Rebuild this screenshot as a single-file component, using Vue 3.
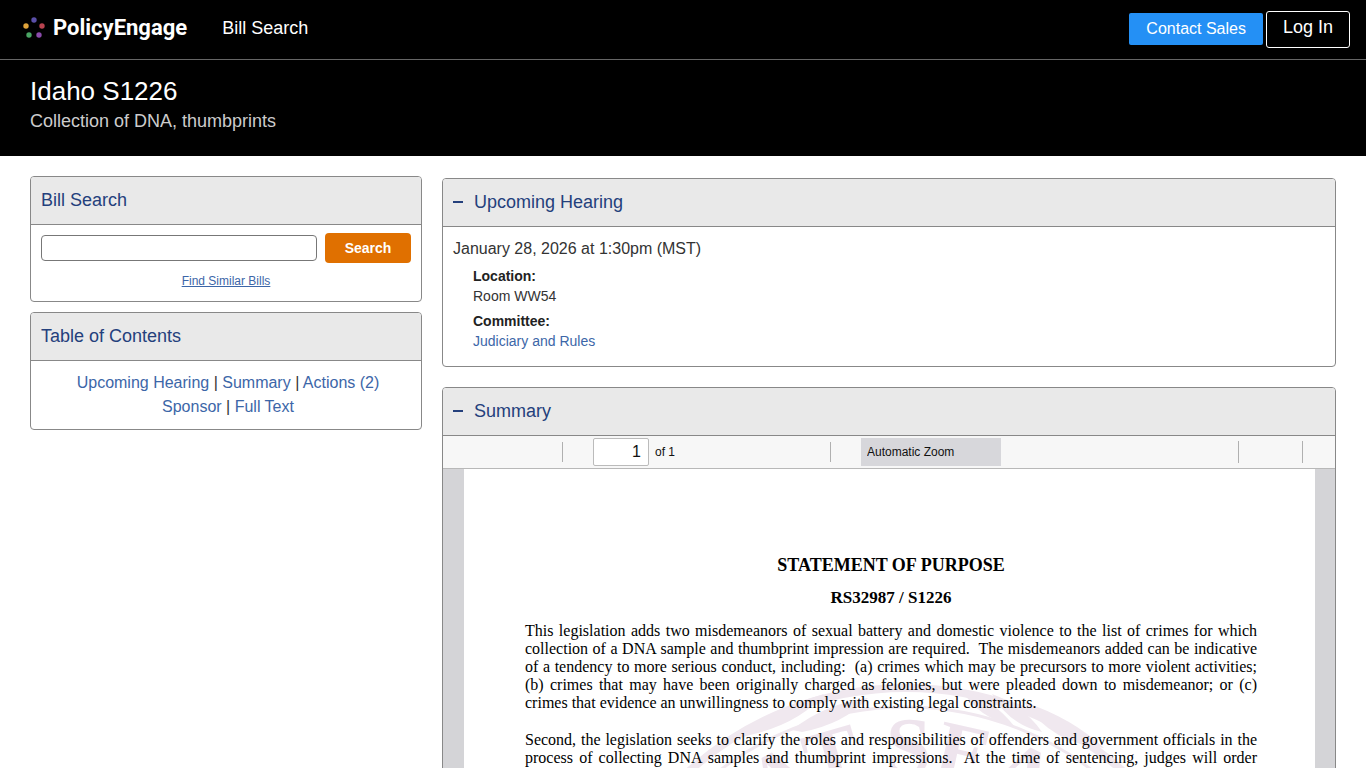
<script setup>
import { ref } from 'vue'

const query = ref('')
const pageNumber = ref('1')
const dots = [
  { x: 12, y: 3, c: '#5a4fa8' },
  { x: 4, y: 9, c: '#e0a33a' },
  { x: 20, y: 9, c: '#b8434f' },
  { x: 7, y: 18, c: '#4aa564' },
  { x: 17, y: 18, c: '#8a4bab' }
]
const first = [
  'This legislation adds two misdemeanors of sexual battery and domestic violence to the list of crimes for which',
  'collection of a DNA sample and thumbprint impression are required.\u00a0 The misdemeanors added can be indicative',
  'of a tendency to more serious conduct, including:\u00a0 (a) crimes which may be precursors to more violent activities;',
  '(b) crimes that may have been originally charged as felonies, but were pleaded down to misdemeanor; or (c)',
  'crimes that evidence an unwillingness to comply with existing legal constraints.'
]
const second = [
  'Second, the legislation seeks to clarify the roles and responsibilities of offenders and government officials in the',
  'process of collecting DNA samples and thumbprint impressions.\u00a0 At the time of sentencing, judges will order'
]
</script>

<template>
  <div class="page">
    <header class="topbar">
      <a class="brand" href="#">
        <svg width="23" height="22" viewBox="0 0 23 22" aria-hidden="true">
          <circle v-for="d in dots" :key="d.c" :cx="d.x" :cy="d.y" r="2.7" :fill="d.c" />
        </svg>
        <span>PolicyEngage</span>
      </a>
      <nav class="nav"><a href="#">Bill Search</a></nav>
      <div class="actions">
        <a class="sales" href="#">Contact Sales</a>
        <a class="login" href="#">Log In</a>
      </div>
    </header>
    <section class="hero">
      <h1>Idaho S1226</h1>
      <p>Collection of DNA, thumbprints</p>
    </section>
    <main class="columns">
      <aside class="side">
        <section class="panel">
          <h2>Bill Search</h2>
          <form class="search" @submit.prevent>
            <div class="row">
              <input v-model="query" type="text" aria-label="Bill Search">
              <button type="submit">Search</button>
            </div>
            <a href="#">Find Similar Bills</a>
          </form>
        </section>
        <section class="panel">
          <h2>Table of Contents</h2>
          <nav class="toc">
            <div><a href="#hearing">Upcoming Hearing</a> | <a href="#summary">Summary</a> | <a href="#">Actions (2)</a></div>
            <div><a href="#">Sponsor</a> | <a href="#">Full Text</a></div>
          </nav>
        </section>
      </aside>
      <div class="content">
        <section id="hearing" class="panel">
          <h2><button type="button" class="toggle" aria-label="Collapse Upcoming Hearing"></button>Upcoming Hearing</h2>
          <div class="hearing">
            <p class="when">January 28, 2026 at 1:30pm (MST)</p>
            <dl>
              <dt>Location:</dt>
              <dd>Room WW54</dd>
              <dt>Committee:</dt>
              <dd><a href="#">Judiciary and Rules</a></dd>
            </dl>
          </div>
        </section>
        <section id="summary" class="panel">
          <h2><button type="button" class="toggle" aria-label="Collapse Summary"></button>Summary</h2>
          <div class="toolbar">
            <div class="tools start">
              <i class="rule"></i>
              <input id="pageno" v-model="pageNumber" type="text">
              <label for="pageno">of 1</label>
            </div>
            <div class="tools middle">
              <i class="rule"></i>
              <select aria-label="Zoom"><option>Automatic Zoom</option></select>
            </div>
            <div class="tools end"><i class="rule"></i><i class="rule"></i></div>
          </div>
          <div class="viewer">
            <article class="sheet">
              <svg class="seal" width="660" height="660" viewBox="0 0 660 660" aria-hidden="true">
                <defs><path id="ring" d="M92 330a238 238 0 0 1 476 0" /></defs>
                <g fill="none" stroke="#f0e8ef">
                  <circle cx="330" cy="330" r="324" stroke-width="8" />
                  <circle cx="330" cy="330" r="305" stroke-width="3" />
                </g>
                <g fill="#f0e8ef">
                  <path d="M155 58Q190 28 248 12Q225 40 178 52Z" />
                  <path d="M216 48Q248 22 292 16Q268 42 226 50Z" />
                  <path d="M386 8Q418 18 438 44Q402 36 386 8Z" />
                  <path d="M416 12Q448 24 466 50Q432 42 416 12Z" />
                  <path d="M448 20Q496 36 528 66Q476 62 448 20Z" />
                </g>
                <text class="sealtext" text-anchor="middle"><textPath href="#ring" startOffset="308">GREAT SEAL</textPath></text>
              </svg>
              <h3>STATEMENT OF PURPOSE</h3>
              <h4>RS32987 / S1226</h4>
              <p><span v-for="l in first" :key="l">{{ l }}</span></p>
              <p class="open"><span v-for="l in second" :key="l">{{ l }}</span></p>
            </article>
          </div>
        </section>
      </div>
    </main>
  </div>
</template>

<style>
body { margin: 0; background: #fff; }
</style>

<style scoped>
* { box-sizing: border-box; }
.page { display: flex; flex-direction: column; height: 100vh; overflow: hidden; font-family: "Liberation Sans", Arial, sans-serif; color: #333; }
a { color: #3c66a8; text-decoration: none; }
h1, h2, h3, h4, p, dl, dd { margin: 0; font-weight: normal; }
.topbar { flex: none; display: flex; align-items: center; height: 60px; padding: 0 16px 2px 22px; background: #000; border-bottom: 1px solid #666; }
.brand { display: flex; align-items: center; gap: 8px; padding-bottom: 2px; color: #fff; font: bold 22px/24px Roboto, sans-serif; }
.nav { margin-left: 35px; font-size: 18px; }
.nav a { color: #fff; }
.actions { display: flex; align-items: center; gap: 3px; margin-left: auto; }
.sales { padding: 0 17px; background: #2490f5; border-radius: 2px; color: #fff; font-size: 16px; line-height: 32px; }
.login { margin-top: 2px; padding: 0 16px 4px; border: 1px solid #fff; border-radius: 3px; color: #fff; font-size: 18px; line-height: 31px; }
.hero { flex: none; padding: 15px 30px 23px; background: #000; color: #fff; }
.hero h1 { font-size: 26px; line-height: 32px; }
.hero p { color: #ccc; font-size: 18px; line-height: 24px; margin-top: 2px; }
.columns { flex: 1; min-height: 0; display: grid; grid-template-columns: 392fr 894fr; gap: 20px; padding: 20px 30px 0; }
.side { display: flex; flex-direction: column; gap: 10px; min-width: 0; }
.content { display: flex; flex-direction: column; gap: 20px; min-width: 0; padding-top: 2px; }
.panel { flex: none; border: 1px solid #888; border-radius: 4px; overflow: hidden; background: #fff; }
h2 { display: flex; align-items: center; height: 48px; padding: 0 10px; background: #e9e9e9; border-bottom: 1px solid #888; color: #24407c; font-size: 18px; }
.toggle { width: 10px; height: 20px; margin-right: 11px; padding: 0 0 2px; border: 0; background: linear-gradient(#24407c, #24407c) center / 10px 2px no-repeat content-box; }
.search { padding: 8px 10px 10px; text-align: center; font-size: 12px; }
.row { display: flex; align-items: center; gap: 8px; margin-bottom: 8px; }
.row input { flex: 1; min-width: 0; height: 26px; border: 1px solid #777; border-radius: 4px; }
.row button { width: 86px; height: 30px; border: 0; border-radius: 4px; background: #e07000; color: #fff; font: bold 14px "Liberation Sans", sans-serif; }
.search > a { display: block; line-height: 20px; text-decoration: underline; }
.toc { padding: 10px 6px 10px 10px; text-align: center; font-size: 16px; line-height: 24px; }
.hearing { padding: 10px 10px 15px; }
.when { font-size: 16px; line-height: 24px; }
dl { padding-left: 20px; font-size: 14px; line-height: 20px; }
dt { padding-top: 5px; font-weight: bold; color: #222; }
.toolbar { display: grid; grid-template-columns: 387fr auto 334fr; align-items: center; height: 33px; background: #f7f7f7; border-bottom: 1px solid #b8b8b8; font-size: 12px; color: #111; }
.tools { display: flex; align-items: center; }
.rule { width: 1px; height: 20px; background: #b0b0b0; }
.start { padding-left: 119px; }
.start input { width: 56px; height: 28px; margin: 0 6px 0 30px; padding: 0 7px; border: 1px solid #bbb; border-radius: 2px; text-align: right; font: 16px "Liberation Sans", sans-serif; color: #111; }
.middle { gap: 30px; }
.middle select { width: 140px; height: 28px; padding: 0 6px; border: 0; border-radius: 0; appearance: none; background: #d7d7db; font: 12px "Liberation Sans", sans-serif; color: #111; }
.end { justify-content: flex-end; gap: 63px; padding-right: 32px; }
.end .rule { height: 22px; }
.viewer { padding: 0 20px 0 21px; background: #d4d4d7; }
.sheet { position: relative; overflow: hidden; padding: 86px 58px 60px 61px; background: #fff; color: #000; font-family: "Liberation Serif", "Times New Roman", serif; }
.seal { position: absolute; left: 50%; top: 213px; margin-left: -314px; }
.sealtext { fill: #eee4ed; font: bold 82px "Liberation Serif", serif; }
h3, h4, .sheet p { position: relative; }
h3 { font-size: 18px; line-height: 20px; font-weight: bold; text-align: center; }
h4 { margin: 13px 0 14px; font-size: 17px; line-height: 20px; font-weight: bold; text-align: center; }
.sheet p { margin-bottom: 19px; font-size: 16px; line-height: 18px; }
.sheet span { display: block; text-align: justify; text-align-last: justify; }
.sheet p:not(.open) span:last-child { text-align-last: left; }
</style>
